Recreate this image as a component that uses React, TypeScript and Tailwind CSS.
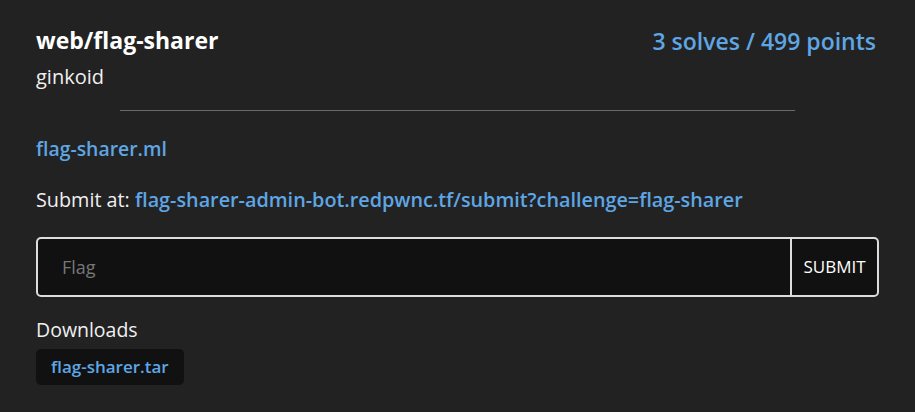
import React from 'react';

const font = { fontFamily: '"Open Sans", "Noto Sans", "Liberation Sans", sans-serif' };

export default function App() {
    return (
        <div className="min-h-[412px] w-[915px] bg-[#222222] text-[#f0f0f0]" style={font}>
            <div className="px-[36px] pt-[25px]">
                {/* Header */}
                <div className="flex justify-between items-start">
                    <div>
                        <div className="text-[23px] font-bold leading-[30px] text-white">web/flag-sharer</div>
                        <div className="mt-[9px] text-[20px] leading-[26px]">ginkoid</div>
                    </div>
                    <div className="mt-[1px] pr-[3px] text-[23px] font-semibold leading-[30px] text-[#5ea6e4]">3 solves / 499 points</div>
                </div>
                <hr className="mx-auto mt-[20px] w-[80%] border-0 border-t border-[#6a6a6a]" />

                <div className="mt-[25px] text-[19.4px] font-semibold leading-[26px] text-[#5ea6e4]">flag-sharer.ml</div>

                <div className="mt-[25px] text-[19.8px] leading-[26px]">
                    Submit at: <span className="font-semibold text-[#5ea6e4]">flag-sharer-admin-bot.redpwnc.tf/submit?challenge=flag-sharer</span>
                </div>

                {/* Flag input */}
                <div className="mt-[24px] flex h-[60px] rounded-[5px] border-2 border-[#dddddd] bg-[#111111] overflow-hidden">
                    <input
                        className="flex-1 bg-transparent px-[24px] text-[18px] text-white placeholder:text-[#777777] outline-none"
                        placeholder="Flag"
                        style={font}
                    />
                    <button className="w-[87px] border-l-2 border-[#dddddd] text-[17px] text-white" style={font}>SUBMIT</button>
                </div>

                <div className="mt-[20px] text-[19.5px] leading-[26px]">Downloads</div>
                <div className="mt-[6px] inline-flex h-[36px] items-center rounded-[5px] bg-[#111111] px-[15px] text-[17px] font-semibold text-[#5ea6e4]">
                    flag-sharer.tar
                </div>
            </div>
        </div>
    );
}
